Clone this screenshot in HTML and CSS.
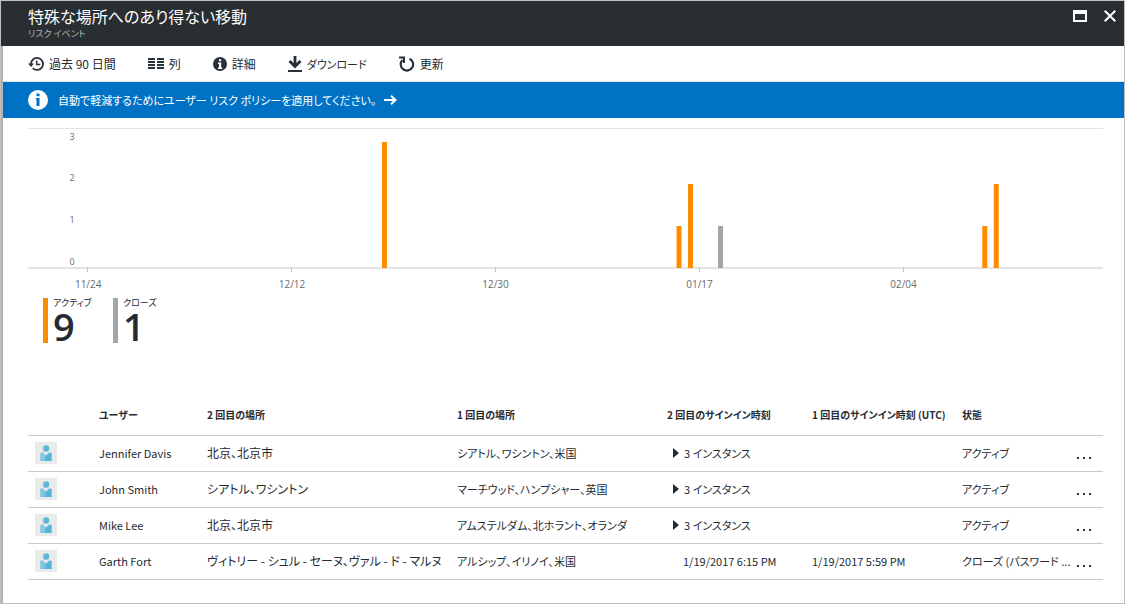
FILE: index.html
```html
<!DOCTYPE html>
<html lang="ja">
<head>
<meta charset="utf-8">
<title>特殊な場所へのあり得ない移動</title>
<link rel="stylesheet" href="styles.css">
</head>
<body>
<main class="blade">
  <header class="blade-header">
    <div class="titles">
      <h1>特殊な場所へのあり得ない移動</h1>
      <p>リスク イベント</p>
    </div>
    <div class="window-actions">
      <button type="button" aria-label="最大化"><svg width="14" height="12" viewBox="0 0 14 12"><path fill="#fff" fill-rule="evenodd" d="M0 0h14v12H0zM2 4v6h10V4z"/></svg></button>
      <button type="button" aria-label="閉じる"><svg width="12" height="12" viewBox="0 0 12 12"><path stroke="#fff" stroke-width="2" d="M.7.7l10.6 10.6M11.3.7L.7 11.3"/></svg></button>
    </div>
  </header>
  <div class="blade-body">
    <nav class="toolbar">
      <button type="button"><svg width="16" height="14" viewBox="0 0 16 14"><path fill="none" stroke="#2a3037" stroke-width="1.8" d="M3 7a6 6 0 1 1 1.7 4.1"/><path fill="#2a3037" d="M0 6.5h6L3 10z"/><path fill="none" stroke="#2a3037" stroke-width="1.5" d="M8.7 3.5v4h3.6"/></svg>過去 90 日間</button>
      <button type="button"><svg width="16" height="11" viewBox="0 0 16 11"><path fill="#2a3037" d="M0 0h7v2H0zM9 0h7v2H9zM0 3h7v2H0zM9 3h7v2H9zM0 6h7v2H0zM9 6h7v2H9zM0 9h7v2H0zM9 9h7v2H9z"/></svg>列</button>
      <button type="button"><svg width="14" height="14" viewBox="0 0 14 14"><circle cx="7" cy="7" r="7" fill="#2a3037"/><path fill="#fff" d="M6 2.300h2.200v2H6zM5 5.500h3.200v5h1V12H5v-1.500h1V7H5z"/></svg>詳細</button>
      <button type="button"><svg width="14" height="16" viewBox="0 0 14 16"><path fill="#2a3037" d="M0 14h14v2H0z"/><path fill="none" stroke="#2a3037" stroke-width="2.800" d="M7 0v10.500M1.500 5L7 10.500 12.500 5"/></svg><span class="kana">ダウンロード</span></button>
      <button type="button"><svg width="16" height="16" viewBox="0 0 16 16"><path fill="none" stroke="#2a3037" stroke-width="2.200" d="M10.500 2.700A6.200 6.200 0 1 1 3.500 4"/><path fill="none" stroke="#2a3037" stroke-width="2" d="M0 1.500h5v5.500"/></svg>更新</button>
    </nav>
    <a class="banner" href="#policy">
      <svg width="20" height="20" viewBox="0 0 20 20"><circle cx="10" cy="10" r="10" fill="#fff"/><path fill="#0072c6" d="M8.500 3.500h3v2.800h-3zM7.800 8h3.700v8h-3V9.500h-.7z"/></svg>
      <span class="kana">自動で軽減するためにユーザー リスク ポリシーを適用してください。</span>
      <svg width="13" height="10" viewBox="0 0 13 10"><path fill="none" stroke="#fff" stroke-width="2" d="M0 5h11.500M7 .7L11.500 5 7 9.300"/></svg>
    </a>
    <div class="content">
      <svg class="chart" role="img" aria-label="リスク イベント数">
        <g class="grid"><line x1="0" x2="100%" y1="0.500" y2="0.500"/></g>
        <g class="axis"><line x1="0" x2="100%" y1="140" y2="140"/></g>
        <g class="y-labels"><text x="4.100%" y="12">3</text><text x="4.100%" y="53">2</text><text x="4.100%" y="95">1</text><text x="4.100%" y="137">0</text></g>
        <g class="ticks">
          <line x1="5.530%" x2="5.530%" y1="140" y2="144"/><line x1="24.510%" x2="24.510%" y1="140" y2="144"/><line x1="43.490%" x2="43.490%" y1="140" y2="144"/><line x1="62.470%" x2="62.470%" y1="140" y2="144"/><line x1="81.440%" x2="81.440%" y1="140" y2="144"/>
        </g>
        <g class="x-labels"><text x="5.600%" y="160">11/24</text><text x="24.560%" y="160">12/12</text><text x="43.490%" y="160">12/30</text><text x="62.470%" y="160">01/17</text><text x="81.440%" y="160">02/04</text></g>
        <g class="bars">
          <line x1="33.160%" x2="33.160%" y1="14" y2="140"/>
          <line x1="60.560%" x2="60.560%" y1="98" y2="140"/>
          <line x1="61.630%" x2="61.630%" y1="56" y2="140"/>
          <line class="closed" x1="64.420%" x2="64.420%" y1="98" y2="140"/>
          <line x1="89%" x2="89%" y1="98" y2="140"/>
          <line x1="90.070%" x2="90.070%" y1="56" y2="140"/>
        </g>
      </svg>
      <div class="legend">
        <div class="stat"><span>アクティブ</span><strong>9</strong></div>
        <div class="stat closed"><span>クローズ</span><strong>1</strong></div>
      </div>
      <table class="events">
        <colgroup><col class="c-icon"><col class="c-user"><col class="c-second"><col><col class="c-time2"><col class="c-time1"><col class="c-state"><col class="c-menu"></colgroup>
        <thead><tr><th></th><th>ユーザー</th><th>2 回目の場所</th><th>1 回目の場所</th><th>2 回目のサインイン時刻</th><th>1 回目のサインイン時刻 (UTC)</th><th>状態</th><th></th></tr></thead>
        <tbody>
          <tr><td><svg class="avatar"><use href="#person"/></svg></td><td>Jennifer Davis</td><td class="place">北京、北京市</td><td>シアトル、ワシントン、米国</td><td><button type="button" class="expand"><svg width="6" height="10"><path d="M0 0l6 5-6 5z"/></svg>3 インスタンス</button></td><td></td><td>アクティブ</td><td><button type="button" class="more" aria-label="その他"><svg width="16" height="3"><use href="#dots"/></svg></button></td></tr>
          <tr><td><svg class="avatar"><use href="#person"/></svg></td><td>John Smith</td><td class="place">シアトル、ワシントン</td><td>マーチウッド、ハンプシャー、英国</td><td><button type="button" class="expand"><svg width="6" height="10"><path d="M0 0l6 5-6 5z"/></svg>3 インスタンス</button></td><td></td><td>アクティブ</td><td><button type="button" class="more" aria-label="その他"><svg width="16" height="3"><use href="#dots"/></svg></button></td></tr>
          <tr><td><svg class="avatar"><use href="#person"/></svg></td><td>Mike Lee</td><td class="place">北京、北京市</td><td>アムステルダム、北ホラント、オランダ</td><td><button type="button" class="expand"><svg width="6" height="10"><path d="M0 0l6 5-6 5z"/></svg>3 インスタンス</button></td><td></td><td>アクティブ</td><td><button type="button" class="more" aria-label="その他"><svg width="16" height="3"><use href="#dots"/></svg></button></td></tr>
          <tr><td><svg class="avatar"><use href="#person"/></svg></td><td>Garth Fort</td><td class="place">ヴィトリー - シュル - セーヌ、ヴァル - ド - マルヌ</td><td>アルシップ、イリノイ、米国</td><td class="indent">1/19/2017 6:15 PM</td><td>1/19/2017 5:59 PM</td><td>クローズ (パスワード ...</td><td><button type="button" class="more" aria-label="その他"><svg width="16" height="3"><use href="#dots"/></svg></button></td></tr>
        </tbody>
      </table>
    </div>
  </div>
</main>
<svg class="symbols" aria-hidden="true">
  <symbol id="person" viewBox="0 0 22 22"><path fill="#e9ebeb" d="M0 0h22v22H0z"/><circle cx="11" cy="6.500" r="3.200" fill="#59b4d9"/><path fill="#59b4d9" d="M5.300 11.500q0-1 1-1h1.500L11 13.500l3.200-3h1.500q1 0 1 1V19H5.300z"/><path fill="#fff" fill-opacity=".25" d="M11 3.300a3.200 3.200 0 0 0-2 5.500zM5.300 11.500q0-1 1-1h1.500L11 13.500 9 19H5.300z"/></symbol>
  <symbol id="dots" viewBox="0 0 16 3"><path fill="#1f2a44" d="M1 0h2v2H1zM7 0h2v2H7zM13 0h2v2h-2z"/></symbol>
</svg>
</body>
</html>
```
FILE: styles.css
```css
* { box-sizing: border-box; }
body {
  margin: 0;
  font-family: "Noto Sans CJK JP", sans-serif;
  font-size: 12px;
  line-height: 18px;
  font-feature-settings: "palt";
  color: #252b33;
  background: #fff;
}
button { margin: 0; padding: 0; border: 0; background: none; font: inherit; font-feature-settings: inherit; color: inherit; cursor: pointer; }
svg { display: block; flex: none; }
h1, p { margin: 0; font-weight: 400; }
.symbols { display: none; }
.kana { font-size: 11px; }
.blade { min-height: 100vh; display: flex; flex-direction: column; border: 1px solid #bfc0c0; }
.blade-header { display: flex; justify-content: space-between; height: 45px; padding: 4px 8px 0 27px; background: #292e32; color: #fff; }
.blade-header h1 { font-size: 16px; line-height: 22px; }
.blade-header p { font-size: 9px; line-height: 14px; color: #b4b8ba; }
.window-actions { display: flex; gap: 17px; height: 22px; align-items: center; }
.blade-body { flex: 1; border-left: 2px solid #b3b3b3; }
.toolbar { display: flex; gap: 32px; height: 36px; padding-left: 25px; border-bottom: 1px solid #dfe3e6; }
.toolbar button { display: flex; align-items: center; gap: 5px; }
.banner { display: flex; align-items: center; height: 36px; padding-left: 25px; gap: 8px; background: #0072c6; color: #fff; text-decoration: none; }
.banner span { padding-left: 2px; }
.content { padding: 10px 21px 0 25px; }
.chart { width: 100%; height: 165px; font-size: 10px; font-family: "Open Sans", sans-serif; }
.grid line { stroke: #e3e3e3; }
.axis line { stroke: #e3e3e3; stroke-width: 2px; }
.ticks line { stroke: #c4c4c4; }
.y-labels, .x-labels { text-anchor: middle; fill: #666b70; }
.y-labels { font-size: 9px; }
.bars line { stroke: #ff8c00; stroke-width: 5px; }
.bars .closed { stroke: #a0a5a8; }
.legend { display: flex; gap: 10px; padding: 5px 0 0 15px; }
.stat { width: 60px; height: 45px; padding-left: 5px; border-left: 5px solid #ff8c00; }
.stat.closed { border-color: #a0a5a8; }
.stat span { display: block; font-size: 9px; line-height: 10px; white-space: nowrap; }
.stat strong { display: block; font: 600 38px/36px "Open Sans", sans-serif; }
.events { width: 100%; margin-top: 53px; border-collapse: collapse; table-layout: fixed; }
.events th, .events td { height: 36px; padding: 0; text-align: left; white-space: nowrap; border-bottom: 1px solid #c8c8c8; }
.events th { height: 39px; font-size: 10px; line-height: 12px; }
.events td { font-size: 11px; }
.events .place { font-size: 12px; }
.c-icon { width: 71px; }
.c-user { width: 108px; }
.c-second { width: 250px; }
.c-time2 { width: 145px; }
.c-time1 { width: 150px; }
.c-state { width: 114px; }
.c-menu { width: 27px; }
.avatar { width: 22px; height: 22px; margin-left: 7px; }
.expand { display: flex; align-items: center; gap: 5px; padding-left: 6px; fill: #252b33; }
.events .indent { padding-left: 16px; }
.more { display: block; padding-top: 10px; }
```
